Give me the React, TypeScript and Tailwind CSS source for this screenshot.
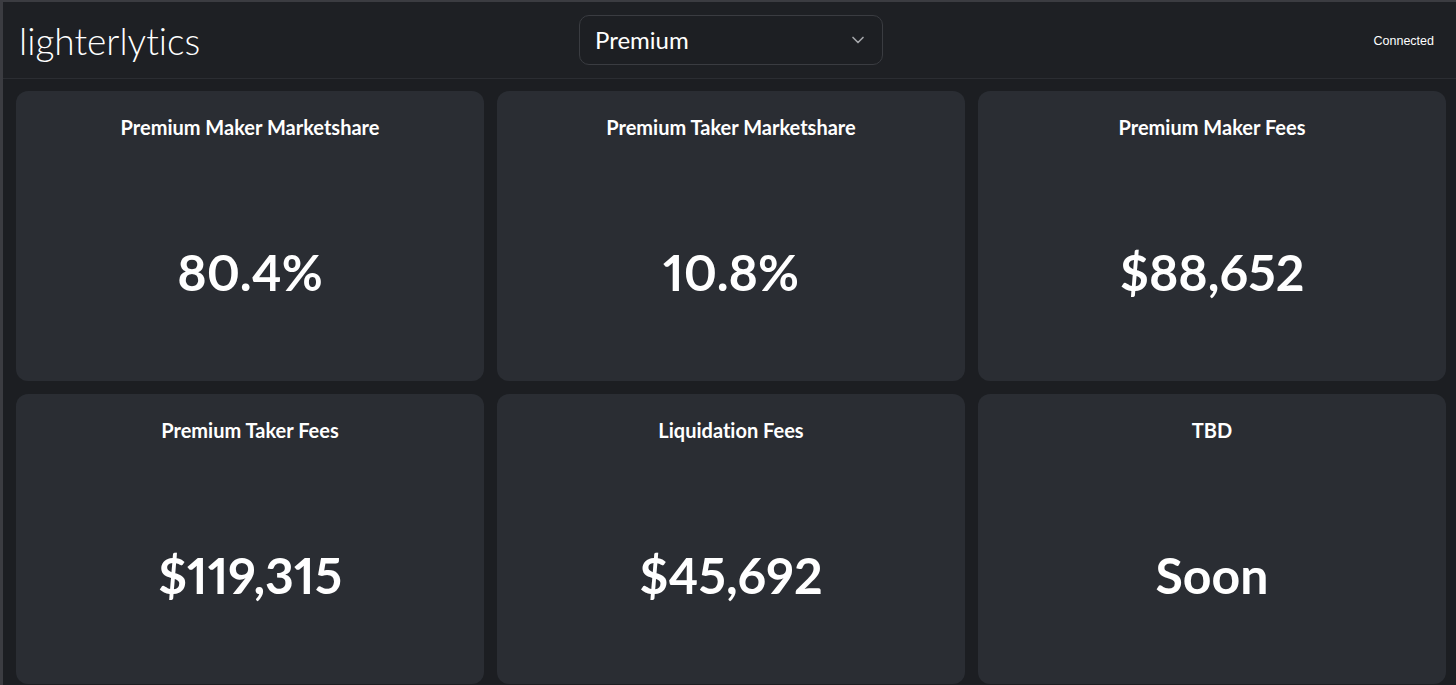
import { ChevronDown } from "lucide-react";

const stats = [
  { title: "Premium Maker Marketshare", value: "80.4%" },
  { title: "Premium Taker Marketshare", value: "10.8%" },
  { title: "Premium Maker Fees", value: "$88,652" },
  { title: "Premium Taker Fees", value: "$119,315" },
  { title: "Liquidation Fees", value: "$45,692" },
  { title: "TBD", value: "Soon" },
];

function StatCard({ title, value }: { title: string; value: string }) {
  return (
    <div className="flex h-[290px] flex-col items-center rounded-[12px] bg-[#2a2d33] pt-[22px]">
      <h3 className="text-[20px] font-bold leading-[28px] text-white">{title}</h3>
      <div className="mt-[101px] text-[50px] font-bold leading-[60px] text-white [font-variant-numeric:proportional-nums]">
        {value}
      </div>
    </div>
  );
}

export default function App() {
  return (
    <div
      className="h-[685px] overflow-hidden border-t-2 border-l-[3px] border-[#3b3c41] bg-[#1c1e22] [font-variant-ligatures:none]"
      style={{ fontFamily: "Lato, 'Noto Sans', sans-serif" }}
    >
      <header className="relative flex h-[77px] items-center justify-between border-b border-[#2b2d32] bg-[#1e2024] pl-[16px] pr-[22px]">
        <div className="text-[37px] font-light leading-none text-white">lighterlytics</div>
        <button className="absolute left-[576px] top-[13px] flex h-[50px] w-[304px] items-center justify-between rounded-[10px] border border-[#3a3c41] bg-[#1d1f23] pl-[15px] pr-[14px] text-[24px] text-white">
          <span>Premium</span>
          <ChevronDown className="h-[20px] w-[20px] text-[#a4a6aa]" strokeWidth={2} />
        </button>
        <span
          className="pt-[2px] text-[12.5px] text-white"
          style={{ fontFamily: "'Liberation Sans', Arial, sans-serif" }}
        >
          Connected
        </span>
      </header>
      <main className="grid grid-cols-3 gap-[13px] pl-[13px] pr-[10px] pt-[12px]">
        {stats.map((s) => (
          <StatCard key={s.title} title={s.title} value={s.value} />
        ))}
      </main>
    </div>
  );
}
